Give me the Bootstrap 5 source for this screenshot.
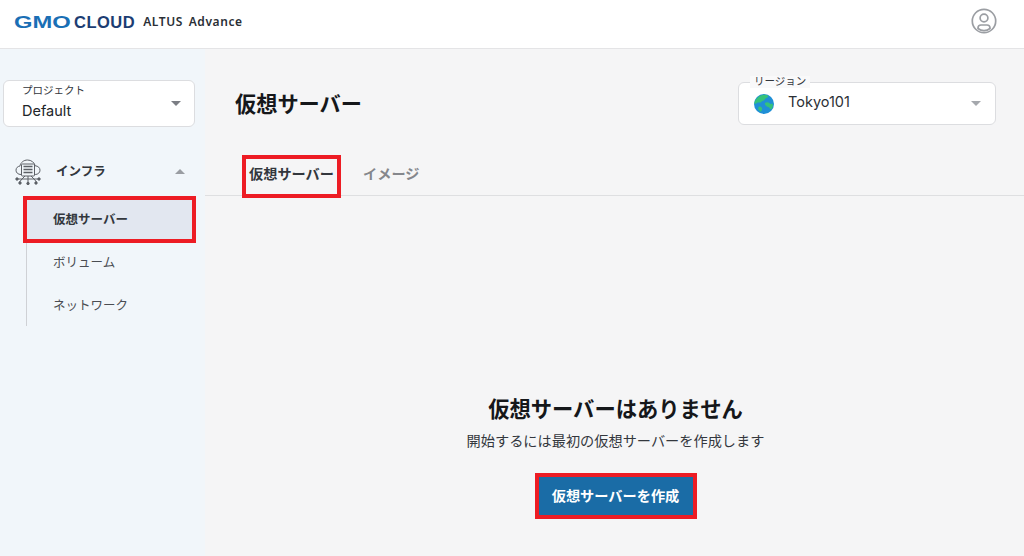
<!DOCTYPE html>
<html lang="ja">
<head>
    <meta charset="utf-8">
    <title>仮想サーバー</title>
    <link href="https://cdn.jsdelivr.net/npm/bootstrap@5.3.0/dist/css/bootstrap.min.css" rel="stylesheet">
    <style>
        html, body { height: 100%; overflow: hidden; }
        body {
            font-family: "Inter", "Noto Sans CJK JP", sans-serif;
            color: #212529;
            background: #f5f5f6;
        }
        .top-bar {
            height: 49px;
            background: #fff;
            border-bottom: 1px solid #e4e4e6;
            padding: 0 27px 4px 14px;
        }
        .logo-gmo {
            font-family: "Liberation Sans", sans-serif;
            font-weight: 700;
            font-size: 16.5px;
            color: #1a6fb5;
            transform: scaleX(1.44);
            transform-origin: left center;
            width: 56px;
        }
        .logo-cloud {
            font-family: "Liberation Sans", sans-serif;
            font-weight: 700;
            font-size: 16.5px;
            color: #1c3d73;
            letter-spacing: .5px;
            margin-left: 4px;
        }
        .logo-sub {
            font-family: "Noto Sans", sans-serif;
            font-weight: 600;
            font-size: 12px;
            color: #2a2f36;
            letter-spacing: .6px;
            word-spacing: 2px;
            margin-left: 8px;
            white-space: pre;
        }
        .user-icon { margin-bottom: 3px; }
        .page-body { height: 507px; }
        .side-col {
            width: 205px;
            flex: none;
            padding: 31px 10px 0 3px;
            background: #f1f6fa;
        }
        .select-box {
            position: relative;
            background: #fff;
            border: 1px solid #dcdde0;
            border-radius: 6px;
        }
        .project-box { height: 47px; padding: 20px 0 0 18px; font-size: 14.5px; line-height: 20px; }
        .float-label {
            position: absolute;
            font-size: 10.5px;
            line-height: 12px;
            color: #33373d;
        }
        .project-box .float-label { left: 18px; top: 4px; }
        .caret-down, .caret-up {
            position: absolute;
            width: 0;
            height: 0;
            border-left: 5px solid transparent;
            border-right: 5px solid transparent;
        }
        .caret-down { border-top: 5px solid #7b7e84; }
        .caret-up { border-bottom: 5px solid #9a9da2; }
        .project-box .caret-down { right: 13px; top: 20px; }
        .infra-row {
            position: relative;
            height: 30px;
            margin: 30px 0 13px 12px;
            font-size: 12.5px;
            font-weight: 700;
            color: #33373d;
        }
        .infra-row .caret-up { right: 10px; top: 12px; }
        .infra-label { margin-left: 15px; }
        .sub-tree { margin-left: 23px; margin-right: 3px; border-left: 1px solid #cfd1d5; height: 126px; }
        .sub-item {
            display: block;
            height: 43px;
            line-height: 43px;
            padding-left: 26px;
            font-size: 12.5px;
            color: #4a4d52;
            text-decoration: none;
        }
        .sub-item.selected {
            height: 39px;
            line-height: 39px;
            margin-bottom: 2px;
            font-weight: 700;
            color: #33373d;
            background: #e2e7f0;
            outline: 4px solid #ed1c24;
            position: relative;
        }
        .main-col { min-width: 0; }
        .head-row { height: 106px; padding: 33px 28px 0 30px; }
        .page-title { font-size: 21.2px; font-weight: 700; line-height: 44px; margin: 0; color: #15171a; }
        .region-box { width: 258px; height: 43px; padding-left: 49px; line-height: 38px; font-size: 14.5px; color: #2b2f35; }
        .region-box .float-label { left: 11px; top: -7px; padding: 0 4px; background: #f9f9fa; }
        .region-box .caret-down { right: 14px; top: 18px; border-top-color: #a5a8ad; }
        .globe { position: absolute; left: 15px; top: 11px; }
        .tab-row { height: 41px; border-bottom: 1px solid #dedfe1; padding-left: 41px; gap: 26px; }
        .tab-link {
            height: 35px;
            margin-top: 4px;
            line-height: 30px;
            font-size: 14.2px;
            font-weight: 700;
            color: #85878c;
            text-decoration: none;
            white-space: nowrap;
        }
        .tab-link.selected { color: #33373d; width: 91px; padding-left: 3px; outline: 4px solid #ed1c24; }
        .empty-wrap { padding: 199px 0 0 2px; }
        .empty-title { font-size: 21.3px; font-weight: 700; line-height: 28px; margin: 0 0 8px; color: #15171a; }
        .empty-note { font-size: 14.2px; line-height: 20px; margin: 0 0 26px; color: #33373d; }
        .make-btn {
            width: 154px;
            height: 38px;
            padding: 0;
            font-size: 14.2px;
            font-weight: 700;
            color: #fff;
            background: #1a6ca6;
            border: 0;
            border-radius: 0;
            outline: 4px solid #ed1c24;
        }
    </style>
</head>
<body>
    <header class="top-bar d-flex align-items-center">
        <span class="logo-gmo">GMO</span>
        <span class="logo-cloud">CLOUD</span>
        <span class="logo-sub">ALTUS Advance</span>
        <svg class="user-icon ms-auto" width="26" height="26" viewBox="0 0 26 26" fill="none" stroke="#9b9ea3" stroke-width="1.7">
            <circle cx="13" cy="13" r="11.7"/>
            <circle cx="13" cy="10" r="3.9"/>
            <path d="M7 20.500V20c0-1.700 1.300-3 3-3h6c1.700 0 3 1.300 3 3v.5c-1.800 1.500-3.800 2.200-6 2.200s-4.200-.7-6-2.200z"/>
        </svg>
    </header>

    <div class="page-body d-flex">
        <nav class="side-col">
            <div class="select-box project-box">
                <span class="float-label">プロジェクト</span>
                Default
                <span class="caret-down"></span>
            </div>
            <div class="infra-row d-flex align-items-center">
                <svg width="26" height="26" viewBox="0 0 26 26" fill="none" stroke="#5c6066" stroke-width="1">
                    <path d="M6 15.500c-3 0-5-1.800-5-4.300 0-2.300 1.700-3.900 3.900-4.100C5.600 3.500 8.800 1 12.500 1c3.800 0 6.900 2.400 7.700 5.800 2.800.1 4.800 2 4.800 4.400s-2 4.300-4.800 4.300"/>
                    <rect x="6.500" y="5" width="13" height="12" rx=".8"/>
                    <path d="M8.500 7.500h9M8.500 10.500h9M8.500 13.500h9" stroke-width="1.500"/>
                    <path d="M3 20h20M10 17l-3 3-2.500 3M13 17v6.500M16 17l3 3 2.500 3"/>
                    <circle cx="2" cy="20" r="1.200" fill="#5c6066"/>
                    <circle cx="24" cy="20" r="1.200" fill="#5c6066"/>
                    <circle cx="5" cy="24" r="1.200" fill="#5c6066"/>
                    <circle cx="13" cy="24.500" r="1.200" fill="#5c6066"/>
                    <circle cx="21" cy="24" r="1.200" fill="#5c6066"/>
                </svg>
                <span class="infra-label">インフラ</span>
                <span class="caret-up"></span>
            </div>
            <div class="sub-tree">
                <a class="sub-item selected" href="#">仮想サーバー</a>
                <a class="sub-item" href="#">ボリューム</a>
                <a class="sub-item" href="#">ネットワーク</a>
            </div>
        </nav>

        <main class="main-col flex-grow-1">
            <div class="head-row d-flex justify-content-between align-items-start">
                <h1 class="page-title">仮想サーバー</h1>
                <div class="select-box region-box">
                    <span class="float-label">リージョン</span>
                    <svg class="globe" width="20" height="20" viewBox="0 0 20 20">
                        <circle cx="10" cy="10" r="10" fill="#1f8fd6"/>
                        <path d="M7 1.500c2-1 5-1 7 0 1 1.500-1 2.500-2.500 3-1 .8-1 2-2.500 2.300-1.200.2-1.300 1.400-2.500 1.700-1.500.3-3-.3-4.500 1-.7.600-1.300.5-1.700-.3C.8 6 3.500 2.800 7 1.500zM11 9c1.500-1.200 3.500-.8 4.500.3.700 1 2 .6 3 .2.800 2 .3 4-.8 5.500-1 .6-1.800 0-2.200-1-.5-1.300-2-1-3-1.800-.8-.8-2.200-1.800-1.500-3.200zM5 12.500c1.300-.3 2.500.5 3 1.500.5 1.300-.3 2.800-1 3.700-1-.4-1.700-1-2.300-1.800-.5-1-.8-2.500.3-3.400z" fill="#35c27a"/>
                    </svg>
                    Tokyo101
                    <span class="caret-down"></span>
                </div>
            </div>
            <div class="tab-row d-flex">
                <a class="tab-link selected" href="#">仮想サーバー</a>
                <a class="tab-link" href="#">イメージ</a>
            </div>
            <div class="empty-wrap text-center">
                <h2 class="empty-title">仮想サーバーはありません</h2>
                <p class="empty-note">開始するには最初の仮想サーバーを作成します</p>
                <button class="btn make-btn" type="button">仮想サーバーを作成</button>
            </div>
        </main>
    </div>

    <script src="https://cdn.jsdelivr.net/npm/bootstrap@5.3.0/dist/js/bootstrap.bundle.min.js"></script>
</body>
</html>
